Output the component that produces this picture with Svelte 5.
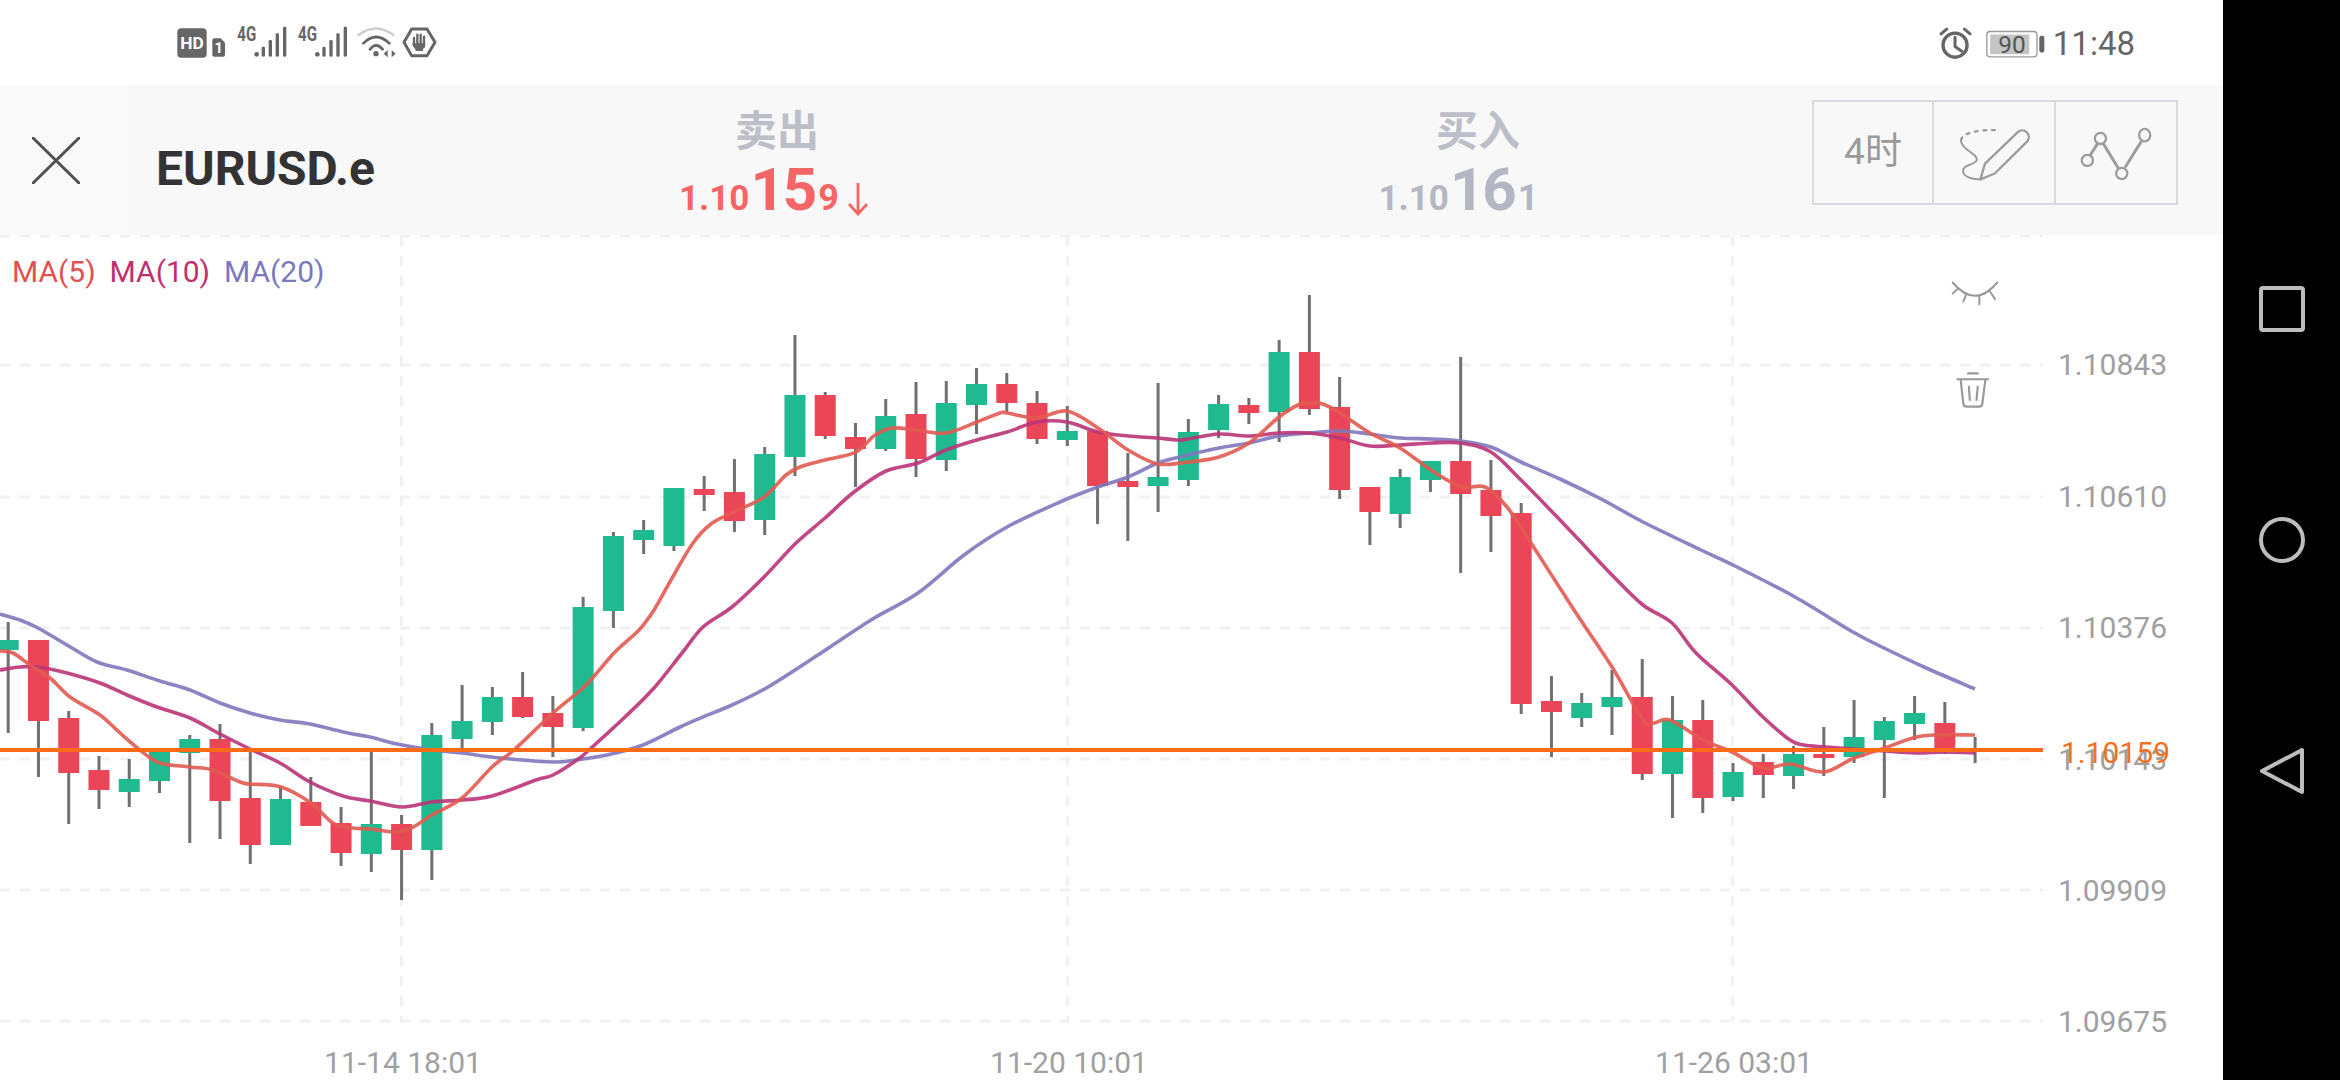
<script>
  // candles: [bodyTop, bodyBottom, wickTop, wickBottom, up]
  const candles = [
    [640, 650, 622, 733, 1], [640, 721, 640, 777, 0], [718, 773, 711, 824, 0], [770, 790, 756, 809, 0],
    [779, 792, 759, 807, 1], [749, 781, 749, 793, 1], [739, 753, 735, 843, 1], [739, 801, 724, 839, 0],
    [798, 845, 750, 864, 0], [799, 845, 787, 845, 1], [802, 826, 777, 826, 0], [823, 853, 807, 866, 0],
    [824, 854, 750, 872, 1], [824, 850, 815, 900, 0], [735, 850, 723, 880, 1], [721, 739, 685, 750, 1],
    [697, 722, 687, 735, 1], [697, 717, 672, 718, 0], [713, 727, 696, 757, 0], [607, 728, 597, 731, 1],
    [536, 611, 532, 628, 1], [530, 540, 520, 554, 1], [488, 546, 488, 551, 1], [489, 495, 476, 511, 0],
    [492, 521, 459, 532, 0], [454, 520, 447, 535, 1], [395, 457, 335, 476, 1], [395, 436, 392, 439, 0],
    [437, 449, 423, 487, 0], [416, 449, 399, 451, 1], [414, 459, 382, 477, 0], [403, 460, 381, 471, 1],
    [384, 405, 368, 434, 1], [384, 403, 373, 412, 0], [403, 439, 391, 444, 0], [431, 440, 406, 446, 1],
    [431, 486, 431, 524, 0], [481, 487, 453, 541, 0], [477, 486, 383, 512, 1], [432, 480, 419, 486, 1],
    [404, 430, 395, 438, 1], [405, 413, 398, 424, 0], [352, 412, 340, 442, 1], [352, 409, 295, 415, 0],
    [407, 490, 377, 499, 0], [487, 512, 487, 545, 0], [477, 514, 469, 528, 1], [461, 480, 461, 492, 1],
    [461, 494, 357, 573, 0], [490, 516, 460, 552, 0], [513, 704, 503, 714, 0], [701, 712, 676, 757, 0],
    [703, 718, 693, 727, 1], [697, 707, 670, 735, 1], [697, 774, 659, 780, 0], [720, 774, 696, 818, 1],
    [720, 798, 700, 813, 0], [772, 797, 763, 801, 1], [762, 775, 754, 798, 0], [754, 776, 746, 789, 1],
    [754, 758, 727, 776, 0], [737, 757, 700, 763, 1], [721, 740, 717, 798, 1], [713, 724, 696, 740, 1],
    [723, 752, 702, 754, 0], [748, 752, 737, 763, 1],
  ];

  const ma5 = [
    [0, 651], [13, 653], [30, 665], [50, 678], [70, 697], [100, 715], [120, 733], [140, 750], [160, 763],
    [190, 767], [213, 770], [240, 782], [250, 784], [281, 787], [311, 803], [333, 823], [353, 828], [371, 829],
    [395, 832], [413, 827], [432, 815], [462, 798], [492, 767], [514, 750], [553, 713], [586, 685], [614, 653],
    [639, 630], [654, 610], [671, 580], [693, 543], [711, 524], [734, 512], [764, 497], [786, 475], [800, 467],
    [825, 460], [856, 452], [875, 435], [893, 428], [916, 430], [946, 433], [977, 422], [1000, 413], [1007, 413],
    [1037, 418], [1067, 411], [1098, 428], [1128, 450], [1158, 464], [1188, 462], [1219, 457], [1249, 443],
    [1279, 417], [1300, 404], [1309, 403], [1323, 404], [1340, 413], [1370, 433], [1400, 448], [1431, 470],
    [1461, 487], [1485, 487], [1507, 507], [1531, 543], [1576, 613], [1612, 667], [1643, 720], [1654, 723],
    [1670, 720], [1703, 740], [1732, 752], [1763, 768], [1790, 764], [1824, 772], [1854, 758], [1885, 748],
    [1922, 736], [1975, 735],
  ];
  const ma10 = [
    [0, 670], [20, 667], [38, 667], [67, 673], [100, 683], [127, 695], [157, 707], [190, 718], [220, 734],
    [250, 749], [280, 763], [310, 782], [343, 796], [370, 801], [402, 807], [432, 802], [462, 800], [492, 796],
    [536, 780], [553, 775], [577, 760], [589, 750], [625, 717], [654, 688], [682, 653], [703, 627], [732, 607],
    [764, 577], [796, 543], [825, 518], [854, 492], [886, 471], [918, 463], [946, 450], [977, 440], [1007, 432],
    [1037, 422], [1067, 422], [1098, 432], [1128, 436], [1158, 438], [1177, 440], [1188, 439], [1219, 434],
    [1249, 436], [1279, 433], [1309, 433], [1340, 438], [1370, 446], [1400, 445], [1431, 443], [1461, 443],
    [1491, 452], [1521, 480], [1560, 520], [1580, 541], [1612, 575], [1643, 605], [1672, 623],
    [1696, 653], [1732, 685], [1763, 717], [1790, 740], [1804, 745], [1826, 747], [1854, 749], [1885, 751],
    [1915, 753], [1945, 752], [1975, 753],
  ];
  const ma20 = [
    [0, 614], [20, 620], [38, 628], [67, 645], [97, 662], [127, 670], [160, 681], [190, 690], [220, 703],
    [250, 713], [280, 720], [310, 724], [343, 732], [370, 737], [397, 744], [432, 750], [462, 753], [500, 758],
    [553, 762], [575, 760], [607, 755], [643, 745], [678, 728], [703, 717], [732, 705], [768, 687], [821, 653],
    [871, 620], [918, 593], [964, 555], [1007, 527], [1060, 502], [1098, 487], [1128, 477], [1158, 463],
    [1188, 455], [1219, 448], [1249, 443], [1279, 436], [1309, 433], [1340, 431], [1370, 434], [1400, 438],
    [1431, 439], [1461, 441], [1491, 447], [1521, 462], [1560, 479], [1603, 500], [1643, 522], [1701, 550],
    [1737, 567], [1795, 597], [1853, 632], [1884, 648], [1924, 667], [1975, 689],
  ];

  const prices = [
    { y: 364, label: "1.10843" },
    { y: 496, label: "1.10610" },
    { y: 627, label: "1.10376" },
    { y: 759, label: "1.10143" },
    { y: 890, label: "1.09909" },
    { y: 1021, label: "1.09675" },
  ];
  const gridY = [236, 365, 497, 628, 759, 890, 1021];
  const times = [
    { x: 403, label: "11-14 18:01" },
    { x: 1069, label: "11-20 10:01" },
    { x: 1734, label: "11-26 03:01" },
  ];

  const candleX = (i) => 8.2 + 30.26 * i;
  const signalOffsets = [0, 182];

  // catmull-rom through the sampled points
  function smooth(pts) {
    let d = `M${pts[0][0]} ${pts[0][1]}`;
    for (let i = 0; i < pts.length - 1; i++) {
      const p0 = pts[i - 1] || pts[i];
      const p1 = pts[i];
      const p2 = pts[i + 1];
      const p3 = pts[i + 2] || p2;
      const c1x = p1[0] + (p2[0] - p0[0]) / 6;
      const c1y = p1[1] + (p2[1] - p0[1]) / 6;
      const c2x = p2[0] - (p3[0] - p1[0]) / 6;
      const c2y = p2[1] - (p3[1] - p1[1]) / 6;
      d += `C${c1x.toFixed(1)} ${c1y.toFixed(1)} ${c2x.toFixed(1)} ${c2y.toFixed(1)} ${p2[0]} ${p2[1]}`;
    }
    return d;
  }
</script>

<div class="screen">
  <div class="main">
    <div class="status">
      <svg viewBox="0 0 870 180" width="290" height="60">
        <rect x="52" y="55" width="88" height="88" rx="12" fill="#666" />
        <text x="96" y="116" class="hd">HD</text>
        <path d="M163 85H182L195 98V134Q195 140 189 140H163Q157 140 157 134V91Q157 85 163 85Z" fill="#666" />
        <text x="176" y="130" class="sim">1</text>

        {#each signalOffsets as dx}
          <g transform="translate({dx} 0)">
            <text class="net" transform="translate(232 92) scale(0.78 1)">4G</text>
            <circle cx="290" cy="133" r="7" fill="#666" />
            <rect x="305" y="110" width="10" height="30" rx="4" fill="#666" />
            <rect x="326" y="90" width="10" height="50" rx="4" fill="#666" />
            <rect x="347" y="70" width="10" height="70" rx="4" fill="#666" />
            <rect x="369" y="50" width="10" height="90" rx="4" fill="#666" />
          </g>
        {/each}

        <g fill="none" stroke-linecap="round" stroke-width="8">
          <path d="M595 75Q648 36 700 75" stroke="#cfcfcf" />
          <path d="M610 100Q648 62 688 100" stroke="#666" />
          <path d="M630 118Q648 94 668 118" stroke="#666" />
        </g>
        <circle cx="648" cy="131" r="8" fill="#666" />
        <path d="M683 120V142L671 131ZM695 120V142L707 131Z" fill="#666" />

        <path d="M732 97L755 57H801L825 97L801 137H755Z" fill="none" stroke="#666" stroke-width="9" stroke-linejoin="round" />
        <path d="M762 84V108M772 74V104M782 74V104M792 80V110" fill="none" stroke="#666" stroke-width="7" stroke-linecap="round" />
        <path d="M756 100L768 123H788L796 100Z" fill="#666" />
      </svg>

      <div class="status-right">
        <svg viewBox="100 40 335 110" width="112" height="37">
          <circle cx="160" cy="100" r="36" fill="none" stroke="#666" stroke-width="10" />
          <path d="M160 76V104L180 118M118 66L135 52M205 66L188 52" fill="none" stroke="#666" stroke-width="9" stroke-linecap="round" stroke-linejoin="round" />
          <rect x="255" y="59" width="150" height="76" rx="10" fill="none" stroke="#999" stroke-width="4" />
          <rect x="265" y="68" width="117" height="59" fill="#c4c4c4" />
          <text x="330" y="124" class="batt">90</text>
          <rect x="412" y="72" width="15" height="50" rx="6" fill="#666" />
        </svg>
        <span class="clock">11:48</span>
      </div>
    </div>

    <header class="bar">
      <div class="close">
        <svg viewBox="0 0 48 47" width="48" height="47">
          <path d="M1 1L47 46M47 1L1 46" stroke="#505050" stroke-width="3" fill="none" stroke-linecap="round" />
        </svg>
      </div>
      <div class="symbol">EURUSD.e</div>

      <div class="quote">
        <div class="side">卖出</div>
        <div class="price sell">
          <span class="sm">1.10</span><span class="lg">15</span><span class="xs">9</span>
          <svg class="arrow" viewBox="0 0 22 34" width="22" height="34">
            <path d="M11 1V32M2 22L11 32L20 22" fill="none" stroke="#f46666" stroke-width="2.800" />
          </svg>
        </div>
      </div>

      <div class="quote">
        <div class="side">买入</div>
        <div class="price buy">
          <span class="sm">1.10</span><span class="lg">16</span><span class="xs">1</span>
          <span class="arrow-gap"></span>
        </div>
      </div>

      <div class="tools">
        <div class="tool period"><span>4时</span></div>
        <div class="tool">
          <svg viewBox="400 35 365 305" width="120" height="100">
            <path d="M585 118C540 116 480 125 482 152" fill="none" stroke="#9c9c9c" stroke-width="7" stroke-dasharray="9 17" stroke-linecap="round" />
            <path d="M482 152C486 180 535 190 530 210C522 225 486 222 488 245C492 262 520 268 541 268" fill="none" stroke="#9c9c9c" stroke-width="6" stroke-linecap="round" />
            <path d="M541 268L555 220L655 124C672 108 700 130 684 152L585 250Z" fill="none" stroke="#9c9c9c" stroke-width="7" stroke-linejoin="round" />
          </svg>
        </div>
        <div class="tool">
          <svg viewBox="765 35 365 305" width="120" height="100">
            <path d="M868 195L892 158M908 158L955 235M975 232L1026 150" fill="none" stroke="#9c9c9c" stroke-width="9" />
            <g fill="none" stroke="#9c9c9c" stroke-width="7">
              <ellipse cx="860" cy="210" rx="17" ry="17" />
              <ellipse cx="900" cy="143" rx="17" ry="17" />
              <ellipse cx="965" cy="250" rx="17" ry="17" />
              <ellipse cx="1035" cy="133" rx="17" ry="19" />
            </g>
          </svg>
        </div>
      </div>
    </header>

    <div class="chart">
      <svg class="plot" viewBox="0 235 2223 845" width="2223" height="845">
        {#each gridY as y}
          <line x1="0" x2="2043" y1={y} y2={y} class="grid" />
        {/each}
        {#each times as t}
          <line x1={t.x - 1.5} x2={t.x - 1.5} y1="236" y2="1021" class="grid" />
          <text x={t.x} y="1073" class="axis mid">{t.label}</text>
        {/each}

        {#each candles as c, i}
          <line x1={candleX(i)} x2={candleX(i)} y1={c[2]} y2={c[3]} class="wick" />
          <rect x={candleX(i) - 10.5} y={c[0]} width="21" height={c[1] - c[0]} fill={c[4] ? "#20ba91" : "#eb4657"} />
        {/each}

        <path d={smooth(ma20)} class="ma" stroke="#8077bd" />
        <path d={smooth(ma10)} class="ma" stroke="#bb3478" />
        <path d={smooth(ma5)} class="ma" stroke="#e25a50" />

        {#each prices as p}
          <text x="2167" y={p.y + 11} class="axis end">{p.label}</text>
        {/each}
        <line x1="0" x2="2043" y1="750" y2="750" class="last" />
        <text x="2170" y="763" class="axis end cur">1.10159</text>
      </svg>

      <div class="legend">
        <span class="m5">MA(5)</span>
        <span class="m10">MA(10)</span>
        <span class="m20">MA(20)</span>
      </div>

      <svg class="eye" viewBox="150 85 150 80" width="50" height="27">
        <path d="M158 95Q225 175 292 95M175 112L158 128M198 132L190 152M238 135V160M270 122L285 145" fill="none" stroke="#999" stroke-width="6" stroke-linecap="round" />
      </svg>
      <svg class="trash" viewBox="160 360 115 115" width="38" height="38">
        <path d="M168 385H266M200 367H235M180 385L188 458Q189 468 198 468H236Q245 468 246 458L255 385M205 405L208 450M232 405L228 450" fill="none" stroke="#999" stroke-width="6.500" />
      </svg>
    </div>
  </div>

  <nav class="nav">
    <svg viewBox="0 0 46 46" width="46" height="46">
      <rect x="2" y="2" width="42" height="42" rx="2" fill="none" stroke="#bdbdbd" stroke-width="4" />
    </svg>
    <svg viewBox="0 0 46 46" width="46" height="46">
      <circle cx="23" cy="23" r="21" fill="none" stroke="#bdbdbd" stroke-width="4" />
    </svg>
    <svg viewBox="0 0 46 46" width="46" height="46">
      <path d="M3 23L43 2V44Z" fill="none" stroke="#bdbdbd" stroke-width="4" stroke-linejoin="round" />
    </svg>
  </nav>
</div>

<style>
  :global(body) {
    margin: 0;
    background: #fff;
  }

  .screen {
    display: flex;
    width: 2340px;
    height: 1080px;
    overflow: hidden;
    font-family: Roboto, "Noto Sans CJK SC", sans-serif;
  }

  .main {
    width: 2223px;
    display: flex;
    flex-direction: column;
  }

  .status {
    height: 85px;
    display: flex;
    justify-content: space-between;
    align-items: flex-start;
    padding: 10px 88px 0 160px;
    box-sizing: border-box;
  }

  .hd {
    font-size: 52px;
    font-weight: 700;
    fill: #fff;
    text-anchor: middle;
  }

  .sim {
    font-size: 44px;
    font-weight: 700;
    fill: #fff;
    text-anchor: middle;
  }

  .net {
    font-size: 58px;
    font-weight: 700;
    fill: #666;
  }

  .batt {
    font-size: 73px;
    fill: #555;
    text-anchor: middle;
  }

  .status-right {
    display: flex;
    align-items: center;
    gap: 6px;
    height: 66px;
  }

  .clock {
    font-size: 33px;
    color: #666;
  }

  .bar {
    height: 150px;
    background: #f8f8f8;
    display: flex;
    align-items: flex-start;
  }

  .close {
    width: 126px;
    height: 150px;
    background: #f9f9f9;
    padding-left: 32px;
    box-sizing: border-box;
    display: flex;
    align-items: center;
  }

  .symbol {
    width: 341px;
    box-sizing: border-box;
    padding: 56px 0 0 30px;
    font-size: 48px;
    line-height: 56px;
    font-weight: 700;
    color: #333;
  }

  .quote {
    width: 620px;
    margin-right: 81px;
    text-align: center;
    padding-top: 24px;
  }

  .quote + .quote {
    margin-right: 24px;
  }

  .side {
    font-size: 42px;
    line-height: 46px;
    font-weight: 700;
    color: #bcbec8;
  }

  .price {
    display: flex;
    justify-content: center;
    align-items: baseline;
    height: 62px;
    padding-right: 6px;
    font-weight: 700;
    line-height: 70px;
  }

  .sell {
    color: #f46666;
  }

  .buy {
    color: #b4b7c3;
  }

  .sm {
    font-size: 35px;
  }

  .lg {
    font-size: 60px;
    margin-left: 1px;
    letter-spacing: -2px;
  }

  .xs {
    font-size: 36px;
    margin-left: 3px;
  }

  .arrow {
    margin-left: 8px;
    align-self: flex-end;
    margin-bottom: 1px;
  }

  .arrow-gap {
    width: 33px;
  }

  .tools {
    display: flex;
    margin-top: 15px;
    border: 2px solid #d8d8e0;
    height: 101px;
  }

  .tool {
    width: 120px;
    display: flex;
    align-items: center;
    justify-content: center;
    border-left: 2px solid #d8d8e0;
  }

  .period {
    width: 118px;
    border-left: 0;
    font-size: 37px;
    line-height: 44px;
    padding-bottom: 2px;
    box-sizing: border-box;
    color: #9a9a9a;
  }

  .chart {
    position: relative;
    height: 845px;
  }

  .plot {
    display: block;
  }

  .grid {
    stroke: #f1f1f1;
    stroke-width: 3;
    stroke-dasharray: 10 10;
  }

  .wick {
    stroke: #707070;
    stroke-width: 3;
  }

  .ma {
    fill: none;
    stroke-width: 3.600;
    opacity: 0.9;
  }

  .last {
    stroke: #fb6a16;
    stroke-width: 4;
  }

  .axis {
    font-family: Roboto, sans-serif;
    font-size: 30px;
    fill: #a0a0a0;
  }

  .mid {
    text-anchor: middle;
  }

  .end {
    text-anchor: end;
  }

  .cur {
    fill: #f5701e;
  }

  .legend {
    position: absolute;
    left: 12px;
    top: 19px;
    display: flex;
    gap: 14px;
    font-size: 30px;
    line-height: 36px;
  }

  .m5 {
    color: #e35050;
  }

  .m10 {
    color: #c0306f;
  }

  .m20 {
    color: #7a78c0;
  }

  .eye {
    position: absolute;
    left: 1950px;
    top: 44px;
  }

  .trash {
    position: absolute;
    left: 1954px;
    top: 136px;
  }

  .nav {
    width: 117px;
    background: #000;
    display: flex;
    flex-direction: column;
    align-items: center;
    justify-content: center;
    gap: 185px;
  }
</style>
